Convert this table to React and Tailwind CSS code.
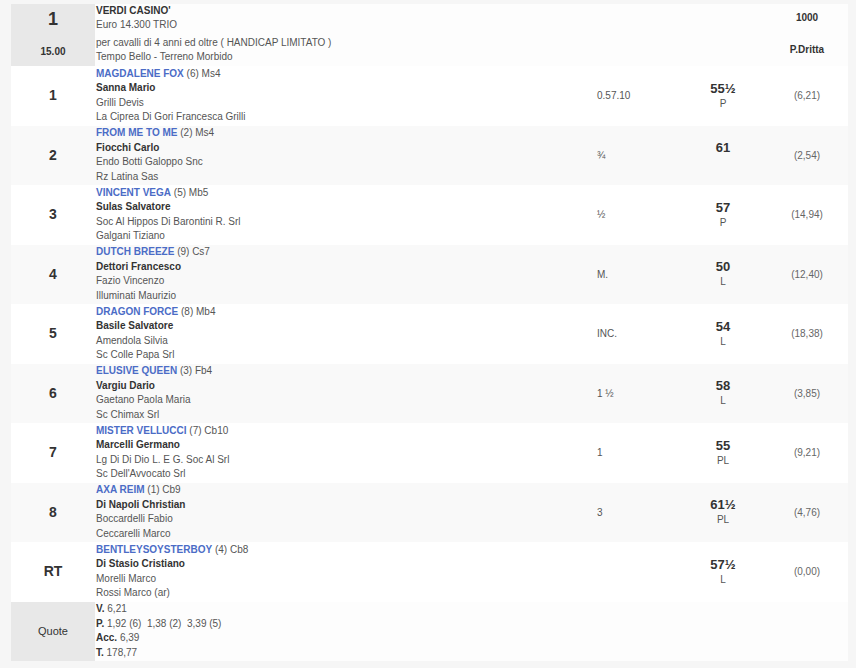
const horses = [
    { pos: '1', name: 'MAGDALENE FOX', extra: '(6) Ms4', jockey: 'Sanna Mario', trainer: 'Grilli Devis', owner: 'La Ciprea Di Gori Francesca Grilli', gap: '0.57.10', weight: '55½', wl: 'P', odds: '(6,21)' },
    { pos: '2', name: 'FROM ME TO ME', extra: '(2) Ms4', jockey: 'Fiocchi Carlo', trainer: 'Endo Botti Galoppo Snc', owner: 'Rz Latina Sas', gap: '¾', weight: '61', wl: '', odds: '(2,54)' },
    { pos: '3', name: 'VINCENT VEGA', extra: '(5) Mb5', jockey: 'Sulas Salvatore', trainer: 'Soc Al Hippos Di Barontini R. Srl', owner: 'Galgani Tiziano', gap: '½', weight: '57', wl: 'P', odds: '(14,94)' },
    { pos: '4', name: 'DUTCH BREEZE', extra: '(9) Cs7', jockey: 'Dettori Francesco', trainer: 'Fazio Vincenzo', owner: 'Illuminati Maurizio', gap: 'M.', weight: '50', wl: 'L', odds: '(12,40)' },
    { pos: '5', name: 'DRAGON FORCE', extra: '(8) Mb4', jockey: 'Basile Salvatore', trainer: 'Amendola Silvia', owner: 'Sc Colle Papa Srl', gap: 'INC.', weight: '54', wl: 'L', odds: '(18,38)' },
    { pos: '6', name: 'ELUSIVE QUEEN', extra: '(3) Fb4', jockey: 'Vargiu Dario', trainer: 'Gaetano Paola Maria', owner: 'Sc Chimax Srl', gap: '1 ½', weight: '58', wl: 'L', odds: '(3,85)' },
    { pos: '7', name: 'MISTER VELLUCCI', extra: '(7) Cb10', jockey: 'Marcelli Germano', trainer: 'Lg Di Di Dio L. E G. Soc Al Srl', owner: "Sc Dell'Avvocato Srl", gap: '1', weight: '55', wl: 'PL', odds: '(9,21)' },
    { pos: '8', name: 'AXA REIM', extra: '(1) Cb9', jockey: 'Di Napoli Christian', trainer: 'Boccardelli Fabio', owner: 'Ceccarelli Marco', gap: '3', weight: '61½', wl: 'PL', odds: '(4,76)' },
    { pos: 'RT', name: 'BENTLEYSOYSTERBOY', extra: '(4) Cb8', jockey: 'Di Stasio Cristiano', trainer: 'Morelli Marco', owner: 'Rossi Marco (ar)', gap: '', weight: '57½', wl: 'L', odds: '(0,00)' },
];

const grid = 'grid grid-cols-[84px_497px_88px_86px_82px]';

export default function App() {
    return (
        <div className="h-[668px] bg-white font-['Liberation_Sans',Arial,sans-serif] text-[10px] text-[#555]">
            <div className="w-[856px] h-[668px] bg-[#f6f6f6] pl-[11px] pt-[4px]">
                <div className="w-[837px]">
                    {/* Race header */}
                    <div className={`${grid} h-[62px] bg-[#fdfdfd]`}>
                        <div className="bg-[#e8e8e8] flex flex-col items-center font-bold text-[#333]">
                            <div className="mt-[5px] text-[18px] leading-[20px]">1</div>
                            <div className="mt-[16px] leading-[14px]">15.00</div>
                        </div>
                        <div className="pl-px leading-[14px]">
                            <div className="font-bold text-[#333]">VERDI CASINO'</div>
                            <div>Euro 14.300 TRIO</div>
                            <div className="mt-[4px]">per cavalli di 4 anni ed oltre ( HANDICAP LIMITATO )</div>
                            <div>Tempo Bello - Terreno Morbido</div>
                        </div>
                        <div></div>
                        <div></div>
                        <div className="flex flex-col items-center font-bold text-[#333] leading-[14px]">
                            <div className="mt-[7px]">1000</div>
                            <div className="mt-[18px]">P.Dritta</div>
                        </div>
                    </div>

                    {/* Arrival order */}
                    {horses.map((h, i) => (
                        <div key={h.pos} className={`${grid} h-[59.5px] ${i % 2 === 1 ? 'bg-[#f9f9f9]' : 'bg-white'}`}>
                            <div className="flex items-center justify-center text-[14px] font-bold text-[#333]">{h.pos}</div>
                            <div className="pl-px flex flex-col justify-center leading-[14.5px]">
                                <div>
                                    <span className="font-bold text-[#4b6cc6]">{h.name}</span> {h.extra}
                                </div>
                                <div className="font-bold text-[#333]">{h.jockey}</div>
                                <div>{h.trainer}</div>
                                <div>{h.owner}</div>
                            </div>
                            <div className="pl-[5px] flex items-center">{h.gap}</div>
                            <div className="flex flex-col items-center justify-center">
                                <div className="text-[13px] font-bold text-[#333] leading-[15px]">{h.weight}</div>
                                <div className="h-[15px] leading-[15px]">{h.wl}</div>
                            </div>
                            <div className="flex items-center justify-center text-[#666]">{h.odds}</div>
                        </div>
                    ))}

                    {/* Quote */}
                    <div className={`${grid} h-[59px] bg-[#fdfdfd]`}>
                        <div className="bg-[#e8e8e8] flex items-center justify-center text-[11px] text-[#333]">Quote</div>
                        <div className="pl-px flex flex-col justify-center leading-[14.5px]">
                            <div><span className="font-bold text-[#333]">V.</span> 6,21</div>
                            <div><span className="font-bold text-[#333]">P.</span> 1,92 (6)&nbsp; 1,38 (2)&nbsp; 3,39 (5)</div>
                            <div><span className="font-bold text-[#333]">Acc.</span> 6,39</div>
                            <div><span className="font-bold text-[#333]">T.</span> 178,77</div>
                        </div>
                        <div></div>
                        <div></div>
                        <div></div>
                    </div>
                </div>
            </div>
        </div>
    );
}
